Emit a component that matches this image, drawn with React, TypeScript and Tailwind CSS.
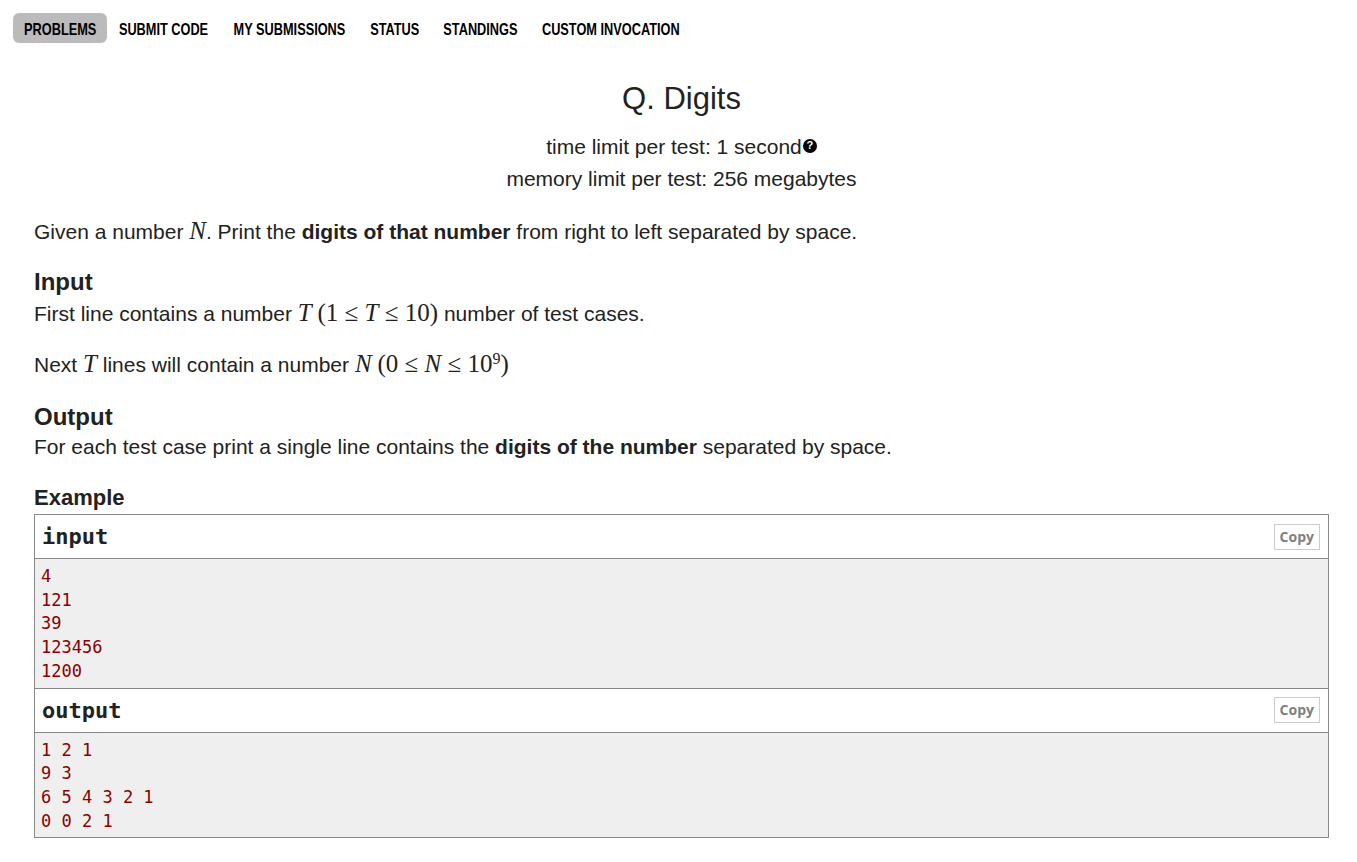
import React from 'react';

const navItems = [
  { label: 'PROBLEMS', w: 'w-[94px]' },
  { label: 'SUBMIT CODE', w: 'w-[113px]' },
  { label: 'MY SUBMISSIONS', w: 'w-[138px]' },
  { label: 'STATUS', w: 'w-[73px]' },
  { label: 'STANDINGS', w: 'w-[98px]' },
  { label: 'CUSTOM INVOCATION', w: 'w-[164px]' },
];

const serif = { fontFamily: '"Liberation Serif", "DejaVu Serif", serif' };

const M: React.FC<{ children: React.ReactNode; italic?: boolean }> = ({ children, italic = true }) => (
  <span className={`text-[25px] leading-none ${italic ? 'italic' : ''}`} style={serif}>
    {children}
  </span>
);

const SampleBlock: React.FC<{ title: string; lines: string[] }> = ({ title, lines }) => (
  <div>
    <div className="h-[44px] flex items-center justify-between pl-[7px] pr-[8px] bg-white border-b border-[#888]">
      <span className="font-bold text-[22px] text-[#222] font-['DejaVu_Sans_Mono',monospace]">{title}</span>
      <button className="h-[26px] px-[5px] border border-[#ccc] text-[#808080] font-bold text-[14px] font-['Open_Sans',sans-serif] leading-none">
        Copy
      </button>
    </div>
    <pre className="bg-[#efefef] text-[#8b0000] pl-[6px] pt-[6px] pb-[4px] text-[17px] leading-[23.7px] font-['DejaVu_Sans_Mono',monospace]">
      {lines.join('\n')}
    </pre>
  </div>
);

const App: React.FC = () => {
  return (
    <div className="min-h-screen bg-white text-[#222] font-['Liberation_Sans',Arial,sans-serif] pt-[13px]">
      <nav className="flex pl-[13px]">
        {navItems.map((item, idx) => (
          <div
            key={item.label}
            className={`${item.w} h-[30px] pt-[3px] flex items-center justify-center text-[17px] font-bold text-black whitespace-nowrap ${
              idx === 0 ? 'bg-[#bbb] rounded-[6px]' : ''
            }`}
          >
            <span className="inline-block scale-x-[0.75]">{item.label}</span>
          </div>
        ))}
      </nav>

      <div className="ml-[34px] w-[1295px]">
        <div className="text-center">
          <h1 className="mt-[39px] text-[31px] leading-[34px]">Q. Digits</h1>
          <div className="mt-[15px] text-[21px] leading-[32px]">
            time limit per test: 1 second
            <span className="relative -top-[5px] ml-[1px] inline-flex w-[14px] h-[14px] rounded-full bg-black text-white text-[11px] font-bold items-center justify-center leading-none">
              ?
            </span>
          </div>
          <div className="text-[21px] leading-[32px]">memory limit per test: 256 megabytes</div>
        </div>

        <p className="mt-[23px] h-[26px] text-[21px] leading-[26px]">
          Given a number <M>N</M>. Print the <b>digits of that number</b> from right to left separated by space.
        </p>

        <h2 className="mt-[24px] text-[24px] font-bold leading-[28px]">Input</h2>
        <p className="mt-[4px] h-[26px] text-[21px] leading-[26px]">
          First line contains a number <M>T</M> <M italic={false}>(1 ≤ </M>
          <M>T</M>
          <M italic={false}> ≤ 10)</M> number of test cases.
        </p>
        <p className="mt-[25px] h-[26px] text-[21px] leading-[26px]">
          Next <M>T</M> lines will contain a number <M>N</M> <M italic={false}>(0 ≤ </M>
          <M>N</M>
          <M italic={false}>
            {' '}
            ≤ 10<sup className="text-[16px]">9</sup>)
          </M>
        </p>

        <h2 className="mt-[26px] text-[24px] font-bold leading-[28px]">Output</h2>
        <p className="mt-[3px] h-[26px] text-[21px] leading-[26px]">
          For each test case print a single line contains the <b>digits of the number</b> separated by space.
        </p>

        <h3 className="mt-[25px] text-[22px] font-bold leading-[26px]">Example</h3>
        <div className="mt-[3px] border border-[#888]">
          <SampleBlock title="input" lines={['4', '121', '39', '123456', '1200']} />
          <div className="border-t border-[#888]">
            <SampleBlock title="output" lines={['1 2 1', '9 3', '6 5 4 3 2 1', '0 0 2 1']} />
          </div>
        </div>
      </div>
    </div>
  );
};

export default App;
